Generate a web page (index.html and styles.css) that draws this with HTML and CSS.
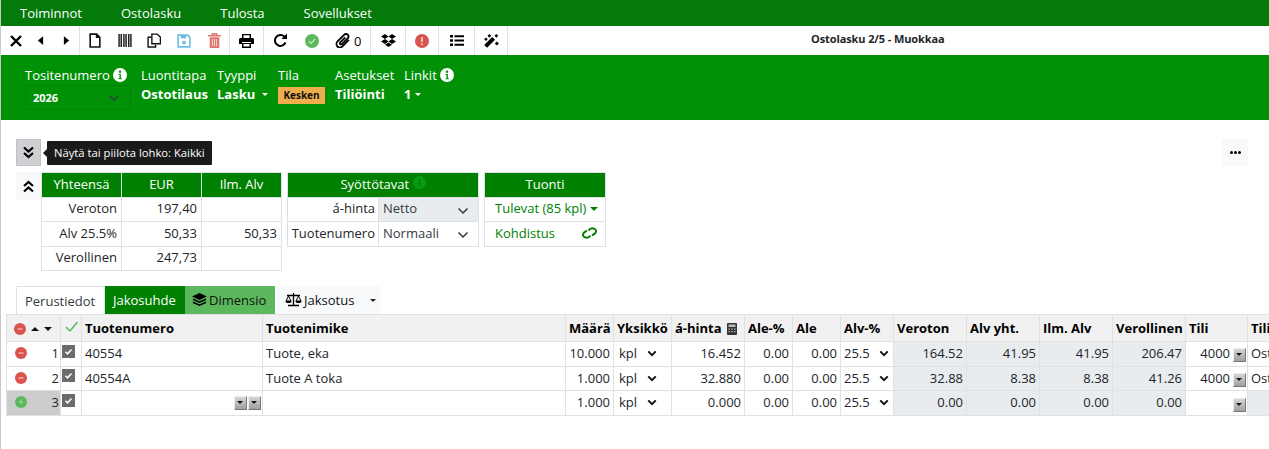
FILE: index.html
```html
<!DOCTYPE html>
<html lang="fi">
<head>
<meta charset="utf-8">
<title>Ostolasku 2/5 - Muokkaa</title>
<link rel="stylesheet" href="styles.css">
</head>
<body>
<svg class="defs" width="0" height="0" aria-hidden="true">
  <symbol id="info" viewBox="0 0 14 14"><circle cx="7" cy="7" r="7" fill="#fff"/><circle cx="7" cy="3.800" r="1.200" fill="#009107"/><path d="M5.600 6h2.300v4.200h.9v1H5.500v-1h1V7h-.9z" fill="#009107"/></symbol>
  <symbol id="chev" viewBox="0 0 12 8"><path d="M1.500 1.500 6 6l4.500-4.500" fill="none" stroke="#343a40" stroke-width="1.500"/></symbol>
  <symbol id="chevb" viewBox="0 0 12 8"><path d="M1.500 1.500 6 6l4.500-4.500" fill="none" stroke="#111" stroke-width="2.400"/></symbol>
  <symbol id="minus" viewBox="0 0 12 12"><circle cx="6" cy="6" r="6" fill="#d9534f"/><rect x="3.500" y="5.300" width="5" height="1.400" fill="#f4b6b3"/></symbol>
  <symbol id="check" viewBox="0 0 13 13"><rect width="13" height="13" fill="#6c6c6c"/><path d="M3.500 6.800 5.500 8.800 9.500 4.500" fill="none" stroke="#fff" stroke-width="1.500"/></symbol>
</svg>

<nav class="menu">
  <span>Toiminnot</span><span>Ostolasku</span><span>Tulosta</span><span>Sovellukset</span>
</nav>

<div class="toolbar">
  <div class="tgroup g1">
    <button class="tb"><svg width="14" height="14" viewBox="0 0 14 14"><path d="M2 2l10 10M12 2 2 12" stroke="#000" stroke-width="2.400" fill="none"/></svg></button>
    <button class="tb"><svg width="7" height="11" viewBox="0 0 8 12"><path d="M7 1v10L1 6z" fill="#000"/></svg></button>
    <button class="tb"><svg width="7" height="11" viewBox="0 0 8 12"><path d="M1 1v10l6-5z" fill="#000"/></svg></button>
  </div>
  <div class="tgroup g2">
    <button class="tb"><svg width="12" height="15" viewBox="0 0 11 14"><path d="M1 1h6l3 3v9H1zM7 1v3h3" fill="none" stroke="#111" stroke-width="1.500"/></svg></button>
    <button class="tb"><svg width="14" height="13" viewBox="0 0 13 12"><path d="M1 0v12M3 0v12M5.500 0v12M7.500 0v12M10 0v12M12 0v12" stroke="#111" stroke-width="1.300"/></svg></button>
    <button class="tb"><svg width="14" height="15" viewBox="0 0 13 14"><path d="M4.500 1h5l3 3v6h-8z" fill="none" stroke="#111" stroke-width="1.300"/><path d="M4 4H1v9h7v-2" fill="none" stroke="#111" stroke-width="1.300"/></svg></button>
    <button class="tb"><svg width="14" height="14" viewBox="0 0 13 13"><path d="M1 1h9l2 2v9H1z" fill="none" stroke="#6cbde3" stroke-width="1.500"/><rect x="3.500" y="1" width="5" height="3" fill="#6cbde3"/><circle cx="6.500" cy="8" r="1.800" fill="#6cbde3"/></svg></button>
    <button class="tb"><svg width="13" height="15" viewBox="0 0 12 14"><path d="M0 2.500h12M4 2V.8h4V2" stroke="#e0716d" stroke-width="1.400" fill="none"/><path d="M1.500 4h9v10h-9z" fill="#e0716d"/><path d="M4 5.500v7M6 5.500v7M8 5.500v7" stroke="#fff" stroke-width=".7"/></svg></button>
  </div>
  <div class="tgroup g3">
    <button class="tb"><svg width="15" height="14" viewBox="0 0 15 14"><path d="M3 0h9v4H3z" fill="#000"/><path d="M0 5.500Q0 4 1.500 4h12Q15 4 15 5.500V10h-3V8H3v2H0z" fill="#000"/><path d="M3 9h9v5H3z" fill="#000"/><path d="M4.500 10h6v2.500h-6z" fill="#fff"/><path d="M4.500 1.200h6V4h-6z" fill="#fff"/></svg></button>
  </div>
  <div class="tgroup g4">
    <button class="tb w33"><svg width="15" height="15" viewBox="0 0 15 15"><path d="M12.500 9.500A5.500 5.500 0 1 1 11.300 3.500" fill="none" stroke="#000" stroke-width="2"/><path d="M14 0.500v5.500H8.500z" fill="#000"/></svg></button>
    <button class="tb w30"><svg width="14" height="14" viewBox="0 0 14 14"><circle cx="7" cy="7" r="7" fill="#5cb85c"/><path d="M4 7.200 6.100 9.300 10 5" fill="none" stroke="#c9e8c9" stroke-width="1.200"/></svg></button>
    <button class="tb w44"><svg width="16" height="15" viewBox="0 0 14 14"><path d="M12.500 6.500 6.500 12.500c-1.500 1.300-3.500 1.300-4.700.1S.6 9 2.100 7.500L8 1.700c1-1 2.500-1 3.400-.1s.9 2.400-.1 3.400L6 10.300c-.5.500-1.300.5-1.700.1s-.4-1.200.1-1.700L9 4.200" fill="none" stroke="#000" stroke-width="1.700"/></svg><span class="count">0</span></button>
  </div>
  <div class="tgroup g5">
    <button class="tb"><svg width="15" height="13" viewBox="0 0 15 13"><path d="M4 0 7.500 2.500 4 5 0 2.500zM11 0l4 2.500L11 5 7.500 2.500zM4 5l3.500 2.500L4 10 0 7.500zM11 5l4 2.500L11 10 7.500 7.500zM4 10.800l3.500-2.300 3.500 2.300-3.500 2.200z" fill="#000"/></svg></button>
  </div>
  <div class="tgroup g6">
    <button class="tb"><svg width="14" height="14" viewBox="0 0 14 14"><circle cx="7" cy="7" r="7" fill="#d9534f"/><rect x="6.200" y="3" width="1.600" height="5" fill="#f8d7d6"/><rect x="6.200" y="9.300" width="1.600" height="1.700" fill="#f8d7d6"/></svg></button>
  </div>
  <div class="tgroup g7">
    <button class="tb"><svg width="14" height="11" viewBox="0 0 14 11"><path d="M0 0h3v2.500H0zM0 4.200h3v2.500H0zM0 8.400h3V11H0z" fill="#000"/><path d="M4.500.3H14v2H4.500zM4.500 4.500H14v2H4.500zM4.500 8.700H14v2H4.500z" fill="#000"/></svg></button>
  </div>
  <div class="tgroup g8">
    <button class="tb"><svg width="15" height="14" viewBox="0 0 14 13"><path d="M1.500 11.500 9 4" stroke="#000" stroke-width="3.800" fill="none"/><path d="M5 0l1.700 1.700L5 3.400 3.300 1.700zM11.500 0l1.700 1.700-1.700 1.700-1.700-1.700zM12 7l1.900 1.900-1.900 1.900-1.900-1.900zM1.800 3.200l1.700 1.700-1.700 1.700L.1 4.900z" fill="#000"/></svg></button>
  </div>
  <div class="ttitle">Ostolasku 2/5 - Muokkaa</div>
</div>

<header class="head">
  <div class="field f-num">
    <div class="flabel">Tositenumero <svg class="inf" width="14" height="14"><use href="#info"/></svg></div>
    <div class="yearsel"><b>2026</b><svg width="12" height="8"><use href="#chev"/></svg></div>
  </div>
  <div class="field f-luo">
    <div class="flabel">Luontitapa</div>
    <div class="fval">Ostotilaus</div>
  </div>
  <div class="field f-tyy">
    <div class="flabel">Tyyppi</div>
    <div class="fval">Lasku<i class="caret"></i></div>
  </div>
  <div class="field f-til">
    <div class="flabel">Tila</div>
    <div class="badge">Kesken</div>
  </div>
  <div class="field f-ase">
    <div class="flabel">Asetukset</div>
    <div class="fval">Tiliöinti</div>
  </div>
  <div class="field">
    <div class="flabel">Linkit <svg class="inf" width="14" height="14"><use href="#info"/></svg></div>
    <div class="fval">1<i class="caret near"></i></div>
  </div>
</header>

<section class="bar">
  <button class="toggle"><svg width="13" height="13" viewBox="0 0 13 13"><path d="M2 1.500 6.500 5.500 11 1.500M2 7 6.500 11 11 7" fill="none" stroke="#000" stroke-width="2.200"/></svg></button>
  <div class="tip">Näytä tai piilota lohko: Kaikki</div>
  <button class="more"><i></i><i></i><i></i></button>
</section>

<section class="summary">
  <button class="collapse"><svg width="13" height="13" viewBox="0 0 13 13"><path d="M2 6 6.500 2 11 6M2 11.500 6.500 7.500 11 11.500" fill="none" stroke="#000" stroke-width="2.200"/></svg></button>
  <table class="box t1">
    <tr><th>Yhteensä</th><th>EUR</th><th>Ilm. Alv</th></tr>
    <tr><td>Veroton</td><td>197,40</td><td></td></tr>
    <tr><td>Alv 25.5%</td><td>50,33</td><td>50,33</td></tr>
    <tr><td>Verollinen</td><td>247,73</td><td></td></tr>
  </table>
  <table class="box t2">
    <colgroup><col class="clab"><col></colgroup>
    <tr><th colspan="2">Syöttötavat <svg class="inf dim" width="13" height="13" viewBox="0 0 14 14"><circle cx="7" cy="7" r="7" fill="#0a9a12"/><rect x="6" y="3" width="2" height="2" fill="#008000"/><rect x="6" y="6" width="2" height="5" fill="#008000"/></svg></th></tr>
    <tr><td class="lab">á-hinta</td><td class="sel grey"><span>Netto</span><svg width="12" height="8"><use href="#chev"/></svg></td></tr>
    <tr><td class="lab">Tuotenumero</td><td class="sel"><span>Normaali</span><svg width="12" height="8"><use href="#chev"/></svg></td></tr>
  </table>
  <table class="box t3">
    <tr><th>Tuonti</th></tr>
    <tr><td class="lnk"><span class="lnkc">Tulevat (85 kpl) <i class="gcaret"></i></span></td></tr>
    <tr><td class="lnk"><span class="lnkb">Kohdistus<svg width="15" height="12" viewBox="0 0 15 12"><path d="M6.500 3.500C8 1.500 10.500 .8 12.500 1.800s2 3.400.2 4.800L10 8.500M8.500 8.500C7 10.500 4.500 11.200 2.500 10.200s-2-3.400-.2-4.800L5 3.500" fill="none" stroke="#008000" stroke-width="2"/></svg></span></td></tr>
  </table>
</section>

<div class="tabs">
  <span class="tab active">Perustiedot</span>
  <span class="tab green">Jakosuhde</span>
  <span class="tab lgreen"><svg width="15" height="14" viewBox="0 0 15 14"><path d="M7.500 0 15 3.500 7.500 7 0 3.500z" fill="#000"/><path d="M1 6.200 7.500 9.200 14 6.200M1 9.200 7.500 12.200 14 9.200" fill="none" stroke="#000" stroke-width="1.500"/></svg> Dimensio</span>
  <span class="tab light"><svg width="17" height="14" viewBox="0 0 17 14"><path d="M8.500 0v12M3 12.500h11M2 2.500h13" stroke="#000" stroke-width="1.300"/><path d="M3.500 3 1 8h5zM13.500 3 11 8h5z" fill="none" stroke="#000" stroke-width="1"/><path d="M.5 8h6a3 2 0 0 1-6 0zM10.500 8h6a3 2 0 0 1-6 0z" fill="#000"/></svg> Jaksotus<i class="caret dark"></i></span>
</div>

<div class="gridwrap">
<table class="grid">
  <colgroup>
    <col class="c1"><col class="c2"><col class="c3"><col class="c4"><col class="c5"><col class="c6"><col class="c7"><col class="c5"><col class="c5"><col class="c9"><col class="c10"><col class="c10"><col class="c10"><col class="c10"><col class="c11"><col class="c12">
  </colgroup>
  <thead>
    <tr>
      <th class="hctl"><svg width="12" height="12"><use href="#minus"/></svg><i class="up"></i><i class="down"></i></th>
      <th class="hchk"><svg width="15" height="13" viewBox="0 0 15 13"><path d="M2 7 6 11 13.500 2" fill="none" stroke="#5cb85c" stroke-width="1.500"/></svg></th>
      <th>Tuotenumero</th><th>Tuotenimike</th><th>Määrä</th><th>Yksikkö</th>
      <th>á-hinta <svg class="calc" width="10" height="12" viewBox="0 0 10 12"><path d="M0 1q0-1 1-1h8q1 0 1 1v10q0 1-1 1H1q-1 0-1-1z" fill="#333"/><path d="M1.500 1.500h7v2.500h-7z" fill="#bbb"/><path d="M1.500 5.500h1.500v1.200H1.500zM4.200 5.500h1.500v1.200H4.200zM7 5.500h1.500v1.200H7zM1.500 8h1.500v1.200H1.500zM4.200 8h1.500v1.200H4.200zM7 8h1.500v1.200H7z" fill="#bbb"/></svg></th>
      <th>Ale-%</th><th>Ale</th><th>Alv-%</th><th>Veroton</th><th>Alv yht.</th><th>Ilm. Alv</th><th>Verollinen</th><th>Tili</th><th>Tilin nimi</th>
    </tr>
  </thead>
  <tbody>
    <tr>
      <td class="ctl"><svg width="12" height="12"><use href="#minus"/></svg><span>1</span></td>
      <td class="chk"><svg width="13" height="13"><use href="#check"/></svg></td>
      <td>40554</td><td>Tuote, eka</td><td class="r">10.000</td>
      <td class="unit"><span>kpl</span><svg width="10" height="7"><use href="#chevb"/></svg></td>
      <td class="r">16.452</td><td class="r">0.00</td><td class="r">0.00</td>
      <td class="unit vat"><span>25.5</span><svg width="10" height="7"><use href="#chevb"/></svg></td>
      <td class="r g">164.52</td><td class="r g">41.95</td><td class="r g">41.95</td><td class="r g">206.47</td>
      <td class="acc"><span>4000</span><b class="drop"></b></td><td class="clip">Ostot</td>
    </tr>
    <tr>
      <td class="ctl"><svg width="12" height="12"><use href="#minus"/></svg><span>2</span></td>
      <td class="chk"><svg width="13" height="13"><use href="#check"/></svg></td>
      <td>40554A</td><td>Tuote A toka</td><td class="r">1.000</td>
      <td class="unit"><span>kpl</span><svg width="10" height="7"><use href="#chevb"/></svg></td>
      <td class="r">32.880</td><td class="r">0.00</td><td class="r">0.00</td>
      <td class="unit vat"><span>25.5</span><svg width="10" height="7"><use href="#chevb"/></svg></td>
      <td class="r g">32.88</td><td class="r g">8.38</td><td class="r g">8.38</td><td class="r g">41.26</td>
      <td class="acc"><span>4000</span><b class="drop"></b></td><td class="clip">Ostot</td>
    </tr>
    <tr>
      <td class="ctl newrow"><svg width="12" height="12" viewBox="0 0 12 12"><circle cx="6" cy="6" r="6" fill="#5cb85c"/><path d="M3.500 6h5M6 3.500v5" stroke="#9ad79a" stroke-width="1"/></svg><span>3</span></td>
      <td class="chk"><svg width="13" height="13"><use href="#check"/></svg></td>
      <td class="drops"><b class="drop"></b><b class="drop"></b></td><td></td><td class="r">1.000</td>
      <td class="unit"><span>kpl</span><svg width="10" height="7"><use href="#chevb"/></svg></td>
      <td class="r">0.000</td><td class="r">0.00</td><td class="r">0.00</td>
      <td class="unit vat"><span>25.5</span><svg width="10" height="7"><use href="#chevb"/></svg></td>
      <td class="r g">0.00</td><td class="r g">0.00</td><td class="r g">0.00</td><td class="r g">0.00</td>
      <td class="acc empty"><span></span><b class="drop"></b></td><td class="g"></td>
    </tr>
  </tbody>
</table>
</div>
</body>
</html>
```

FILE: styles.css
```css
* { box-sizing: border-box; }
html, body { margin: 0; padding: 0; }
body {
  width: 1269px;
  height: 449px;
  overflow: hidden;
  background: #fff;
  color: #212529;
  font: 13px/18px "Open Sans", sans-serif;
  border-left: 1px solid #c8c8c8;
}
.defs { position: absolute; }
button { font: inherit; padding: 0; background: none; border: 0; }

.menu {
  height: 26px;
  padding: 4px 0 0 19px;
  display: flex;
  gap: 39px;
  background: #037a0a;
  color: #fff;
}

.toolbar {
  height: 29px;
  display: flex;
  align-items: stretch;
  background: #fff;
}
.tgroup { display: flex; border-right: 1px solid #dee2e6; }
.g1 { width: 79px; padding-left: 2px; }
.g1 .tb { flex: 1; }
.g2 { width: 150px; }
.g2 .tb { flex: 1; }
.g3 { width: 34px; }
.g4 { width: 107px; }
.g5 { width: 35px; }
.g6 { width: 33px; }
.g7 { width: 36px; }
.g8 { width: 33px; }
.g3 .tb, .g5 .tb, .g6 .tb, .g7 .tb, .g8 .tb { flex: 1; }
.tb { display: flex; align-items: center; justify-content: center; gap: 3px; }
.w33 { width: 33px; }
.w30 { width: 30px; }
.w44 { width: 44px; }
.count { font-size: 13px; color: #000; }
.ttitle {
  flex: 1;
  padding: 4px 0 0 303px;
  font-size: 11px;
  letter-spacing: -.1px;
  font-weight: 700;
  color: #212529;
}

.head {
  height: 65px;
  padding: 10px 0 0 24px;
  display: flex;
  gap: 10px;
  background: #009107;
  color: #fff;
}
.field { display: flex; flex-direction: column; }
.f-num { width: 106px; }
.f-luo { width: 66px; }
.f-tyy { width: 51px; }
.f-til { width: 47px; }
.f-ase { width: 59px; }
.flabel { height: 19px; display: flex; align-items: center; gap: 3px; white-space: nowrap; }
.fval { font-weight: 700; white-space: nowrap; margin-top: 1px; }
.yearsel {
  height: 25px;
  margin-top: 1px;
  padding: 0 10px 0 7px;
  display: flex;
  align-items: center;
  justify-content: space-between;
  border: 1px solid #077f0c;
  font-size: 11px;
}
.yearsel b { font-weight: 700; }
.yearsel svg { opacity: .9; }
.caret {
  display: inline-block;
  margin: 0 0 3px 7px;
  border: 3px solid transparent;
  border-top-color: #fff;
  border-bottom: 0;
}
.caret.near { margin-left: 4px; }
.caret.dark { border-top-color: #212529; margin-left: 14px; }
.badge {
  width: 47px;
  height: 17px;
  margin-top: 3px;
  background: #f0ad4e;
  color: #111;
  font-size: 10px;
  font-weight: 700;
  line-height: 17px;
  text-align: center;
}

.bar {
  position: relative;
  height: 46px;
  padding: 19px 21px 0 15px;
  display: flex;
  justify-content: space-between;
}
.toggle {
  width: 25px;
  height: 27px;
  background: #ced0d3;
  border: 1px solid #bfc2c6;
  display: flex;
  align-items: center;
  justify-content: center;
}
.tip {
  position: absolute;
  left: 46px;
  top: 21px;
  height: 24px;
  padding: 0 7px;
  background: #1a1a1a;
  color: #fff;
  font-size: 11.250px;
  line-height: 24px;
  border-radius: 1px;
}
.tip::before {
  content: "";
  position: absolute;
  left: -4px;
  top: 8px;
  border: 4px solid transparent;
  border-right-color: #1a1a1a;
  border-left: 0;
}
.more {
  width: 26px;
  height: 27px;
  background: #f8f9fa;
  display: flex;
  align-items: center;
  justify-content: center;
  gap: 1px;
}
.more i { width: 3px; height: 3px; border-radius: 50%; background: #000; }

.summary {
  padding: 6px 0 0 15px;
  height: 120px;
  display: flex;
  align-items: flex-start;
}
.collapse {
  width: 25px;
  height: 28px;
  background: #f8f9fa;
  display: flex;
  align-items: center;
  justify-content: center;
}
.box {
  border-collapse: collapse;
  table-layout: fixed;
}
.box th, .box td {
  border: 1px solid #dee2e6;
  height: 24.500px;
  padding: 0 4px 2px;
  font-weight: 400;
}
.box th { background: #008000; color: #fff; text-align: center; }
.box td { text-align: right; }
.t1 { width: 241px; margin-right: 5px; }
.t2 { width: 192px; margin-right: 5px; }
.t3 { width: 122px; }
.clab { width: 91px; }
.box .lab { padding: 0 3px 2px 0; }
.box .sel { text-align: left; position: relative; padding-right: 8px; color: #343a40; }
.sel svg { position: absolute; right: 9px; top: 9px; }
.sel.grey { background: #e9ecef; }
.box .lnk { text-align: left; padding: 0 8px 2px 10px; color: #008000; }
.lnkc { white-space: nowrap; }
.lnkb { display: flex; justify-content: space-between; align-items: center; }
.gcaret {
  display: inline-block;
  margin-bottom: 2px;
  border: 4px solid transparent;
  border-top-color: #008000;
  border-bottom: 0;
}

.tabs {
  height: 28px;
  padding-left: 15px;
  display: flex;
  align-items: stretch;
}
.tab { display: flex; align-items: center; gap: 2px; white-space: nowrap; }
.tab.active { width: 89px; padding-left: 8px; border: 1px solid #dee2e6; border-bottom: 0; color: #343a40; }
.tab.green { width: 80px; padding-left: 8px; background: #008000; color: #fff; }
.tab.lgreen { width: 90px; padding-left: 7px; background: #5cb85c; color: #111; }
.tab.light { width: 103px; margin-left: 2px; padding-left: 8px; background: #f8f9fa; color: #111; gap: 2px; }
.tab.light .caret { margin-bottom: 0; }

.gridwrap { margin-left: 5px; width: 1263px; overflow: hidden; }
.grid { border-collapse: collapse; table-layout: fixed; width: 1300px; }
.c1 { width: 54px; } .c2 { width: 21px; } .c3 { width: 181px; } .c4 { width: 303px; }
.c5 { width: 48px; } .c6 { width: 58px; } .c7 { width: 73px; }
.c9 { width: 53px; } .c10 { width: 73px; } .c11 { width: 62px; } .c12 { width: 84px; }
.grid th, .grid td {
  border: 1px solid #dee2e6;
  padding: 0 3px 1px;
  height: 24.500px;
  white-space: nowrap;
  overflow: hidden;
}
.grid th { height: 27px; padding-bottom: 0; background: #f1f1f1; color: #000; font-weight: 700; text-align: left; }
.grid .r { text-align: right; }
.grid .g { background: #e9ecef; }
.hctl svg { vertical-align: -2px; margin-left: 4px; }
.up, .down { display: inline-block; border: 4px solid transparent; vertical-align: 2px; }
.up { border-bottom-color: #111; border-top: 0; margin-left: 5px; }
.down { border-top-color: #111; border-bottom: 0; margin-left: 5px; }
.grid .hchk { text-align: center; padding: 0; }
.calc { vertical-align: -2px; margin-left: 2px; }
.grid .ctl { text-align: right; padding: 0 1px 1px 8px; }
.ctl svg { float: left; margin-top: 3px; }
.grid .newrow { background: #ccc; }
.grid .chk { padding: 0; text-align: center; }
.chk svg { display: block; margin: 0 auto 5px 1px; }
.grid .unit { padding: 0 8px 1px 5px; }
.unit { position: relative; }
.unit svg { position: absolute; right: 14px; top: 8px; }
.grid .vat { padding-left: 3px; }
.vat svg { right: 4px; }
.grid .acc { text-align: right; padding: 0 17px 1px 0; position: relative; }
.drop {
  display: inline-block;
  position: relative;
  width: 13px;
  height: 14px;
  background: linear-gradient(#d6d6d6, #9f9f9f);
  border: 1px solid;
  border-color: #eee #777 #777 #eee;
}
.drop::after {
  content: "";
  position: absolute;
  left: 2px;
  top: 4px;
  border: 3.500px solid transparent;
  border-top-color: #111;
  border-bottom: 0;
}
.acc .drop { position: absolute; right: 1px; top: 6px; }
.acc.empty .drop { top: 7px; }
.grid .drops { text-align: right; padding: 0 1px 0 0; line-height: 14px; }
.drops .drop { margin-left: 1px; vertical-align: -3px; }
.grid .clip { padding-left: 3px; }
```
